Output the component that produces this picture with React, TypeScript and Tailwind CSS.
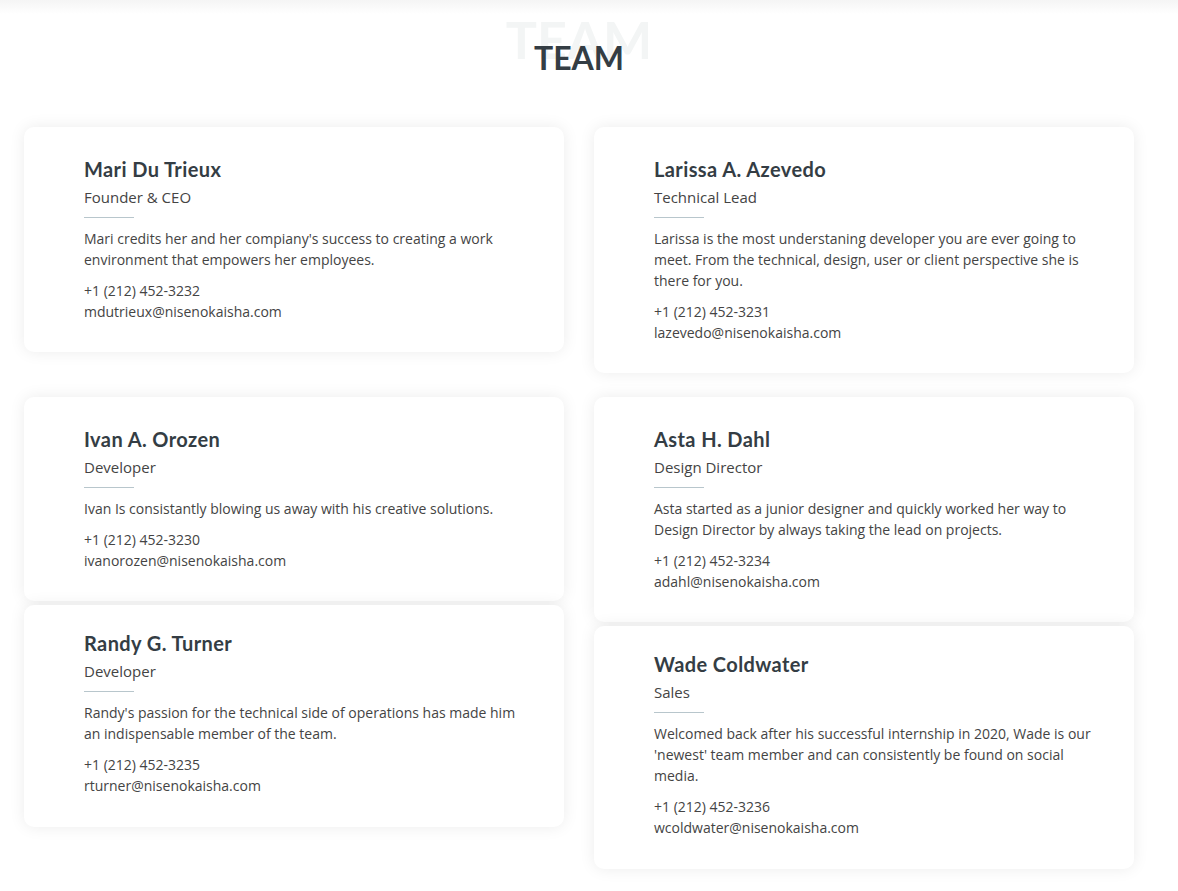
import React from 'react'

type Member = {
  name: string
  role: string
  bio: string
  phone: string
  email: string
}

const members: Record<string, Member> = {
  mari: {
    name: 'Mari Du Trieux',
    role: 'Founder & CEO',
    bio: "Mari credits her and her compiany's success to creating a work environment that empowers her employees.",
    phone: '+1 (212) 452-3232',
    email: 'mdutrieux@nisenokaisha.com',
  },
  larissa: {
    name: 'Larissa A. Azevedo',
    role: 'Technical Lead',
    bio: 'Larissa is the most understaning developer you are ever going to meet. From the technical, design, user or client perspective she is there for you.',
    phone: '+1 (212) 452-3231',
    email: 'lazevedo@nisenokaisha.com',
  },
  ivan: {
    name: 'Ivan A. Orozen',
    role: 'Developer',
    bio: 'Ivan Is consistantly blowing us away with his creative solutions.',
    phone: '+1 (212) 452-3230',
    email: 'ivanorozen@nisenokaisha.com',
  },
  randy: {
    name: 'Randy G. Turner',
    role: 'Developer',
    bio: "Randy's passion for the technical side of operations has made him an indispensable member of the team.",
    phone: '+1 (212) 452-3235',
    email: 'rturner@nisenokaisha.com',
  },
  asta: {
    name: 'Asta H. Dahl',
    role: 'Design Director',
    bio: 'Asta started as a junior designer and quickly worked her way to Design Director by always taking the lead on projects.',
    phone: '+1 (212) 452-3234',
    email: 'adahl@nisenokaisha.com',
  },
  wade: {
    name: 'Wade Coldwater',
    role: 'Sales',
    bio: "Welcomed back after his successful internship in 2020, Wade is our 'newest' team member and can consistently be found on social media.",
    phone: '+1 (212) 452-3236',
    email: 'wcoldwater@nisenokaisha.com',
  },
}

function MemberCard({ m, stacked = false }: { m: Member; stacked?: boolean }) {
  return (
    <div
      className={
        stacked
          ? 'bg-white rounded-[10px] shadow-[0_0_16px_rgba(0,0,0,0.08)] pl-[60px] pr-[30px] pt-[26px] pb-[31px]'
          : 'bg-white rounded-[10px] shadow-[0_0_16px_rgba(0,0,0,0.08)] pl-[60px] pr-[30px] pt-[30px] pb-[30px]'
      }
    >
      <h4 className="font-['Lato',sans-serif] font-bold text-[20px] leading-[24px] tracking-[0.4px] text-[#343d44] mb-[5px]">
        {m.name}
      </h4>
      <span className="block text-[15px] leading-[22px] text-[#444] pb-[10px] relative">
        {m.role}
        <span className="absolute left-0 bottom-0 w-[50px] h-px bg-[#b8c6cc]" />
      </span>
      <p className="mt-[10px] text-[14px] leading-[21px] text-[#444]">{m.bio}</p>
      <p className="mt-[10px] text-[14px] leading-[21px] text-[#444]">
        {m.phone}
        <br />
        {m.email}
      </p>
    </div>
  )
}

export default function App() {
  return (
    <div className="min-h-screen bg-white font-['Open_Sans',sans-serif] relative">
      {/* header shadow bleeding in from above */}
      <div className="absolute inset-x-0 top-0 h-[14px] bg-gradient-to-b from-[#f5f5f5] to-white" />

      <section className="relative pt-[38px] pb-[30px] w-[1158px]">
        <div className="relative flex justify-center h-[62px] mb-[27px]">
          <span className="absolute top-[-27px] left-1/2 -translate-x-1/2 font-['Lato',sans-serif] font-bold text-[52px] leading-[56px] text-[#f3f5f5] select-none">
            TEAM
          </span>
          <h2 className="relative font-['Lato',sans-serif] font-bold text-[32px] leading-[40px] text-[#343d44]">
            TEAM
          </h2>
        </div>

        <div className="px-[24px] flex flex-col gap-[24px]">
          <div className="grid grid-cols-2 gap-x-[30px] items-start">
            <MemberCard m={members.mari} />
            <MemberCard m={members.larissa} />
          </div>
          <div className="grid grid-cols-2 gap-x-[30px] items-start">
            <div className="flex flex-col gap-[4px]">
              <MemberCard m={members.ivan} />
              <MemberCard m={members.randy} stacked />
            </div>
            <div className="flex flex-col gap-[4px]">
              <MemberCard m={members.asta} />
              <MemberCard m={members.wade} stacked />
            </div>
          </div>
        </div>
      </section>
    </div>
  )
}
